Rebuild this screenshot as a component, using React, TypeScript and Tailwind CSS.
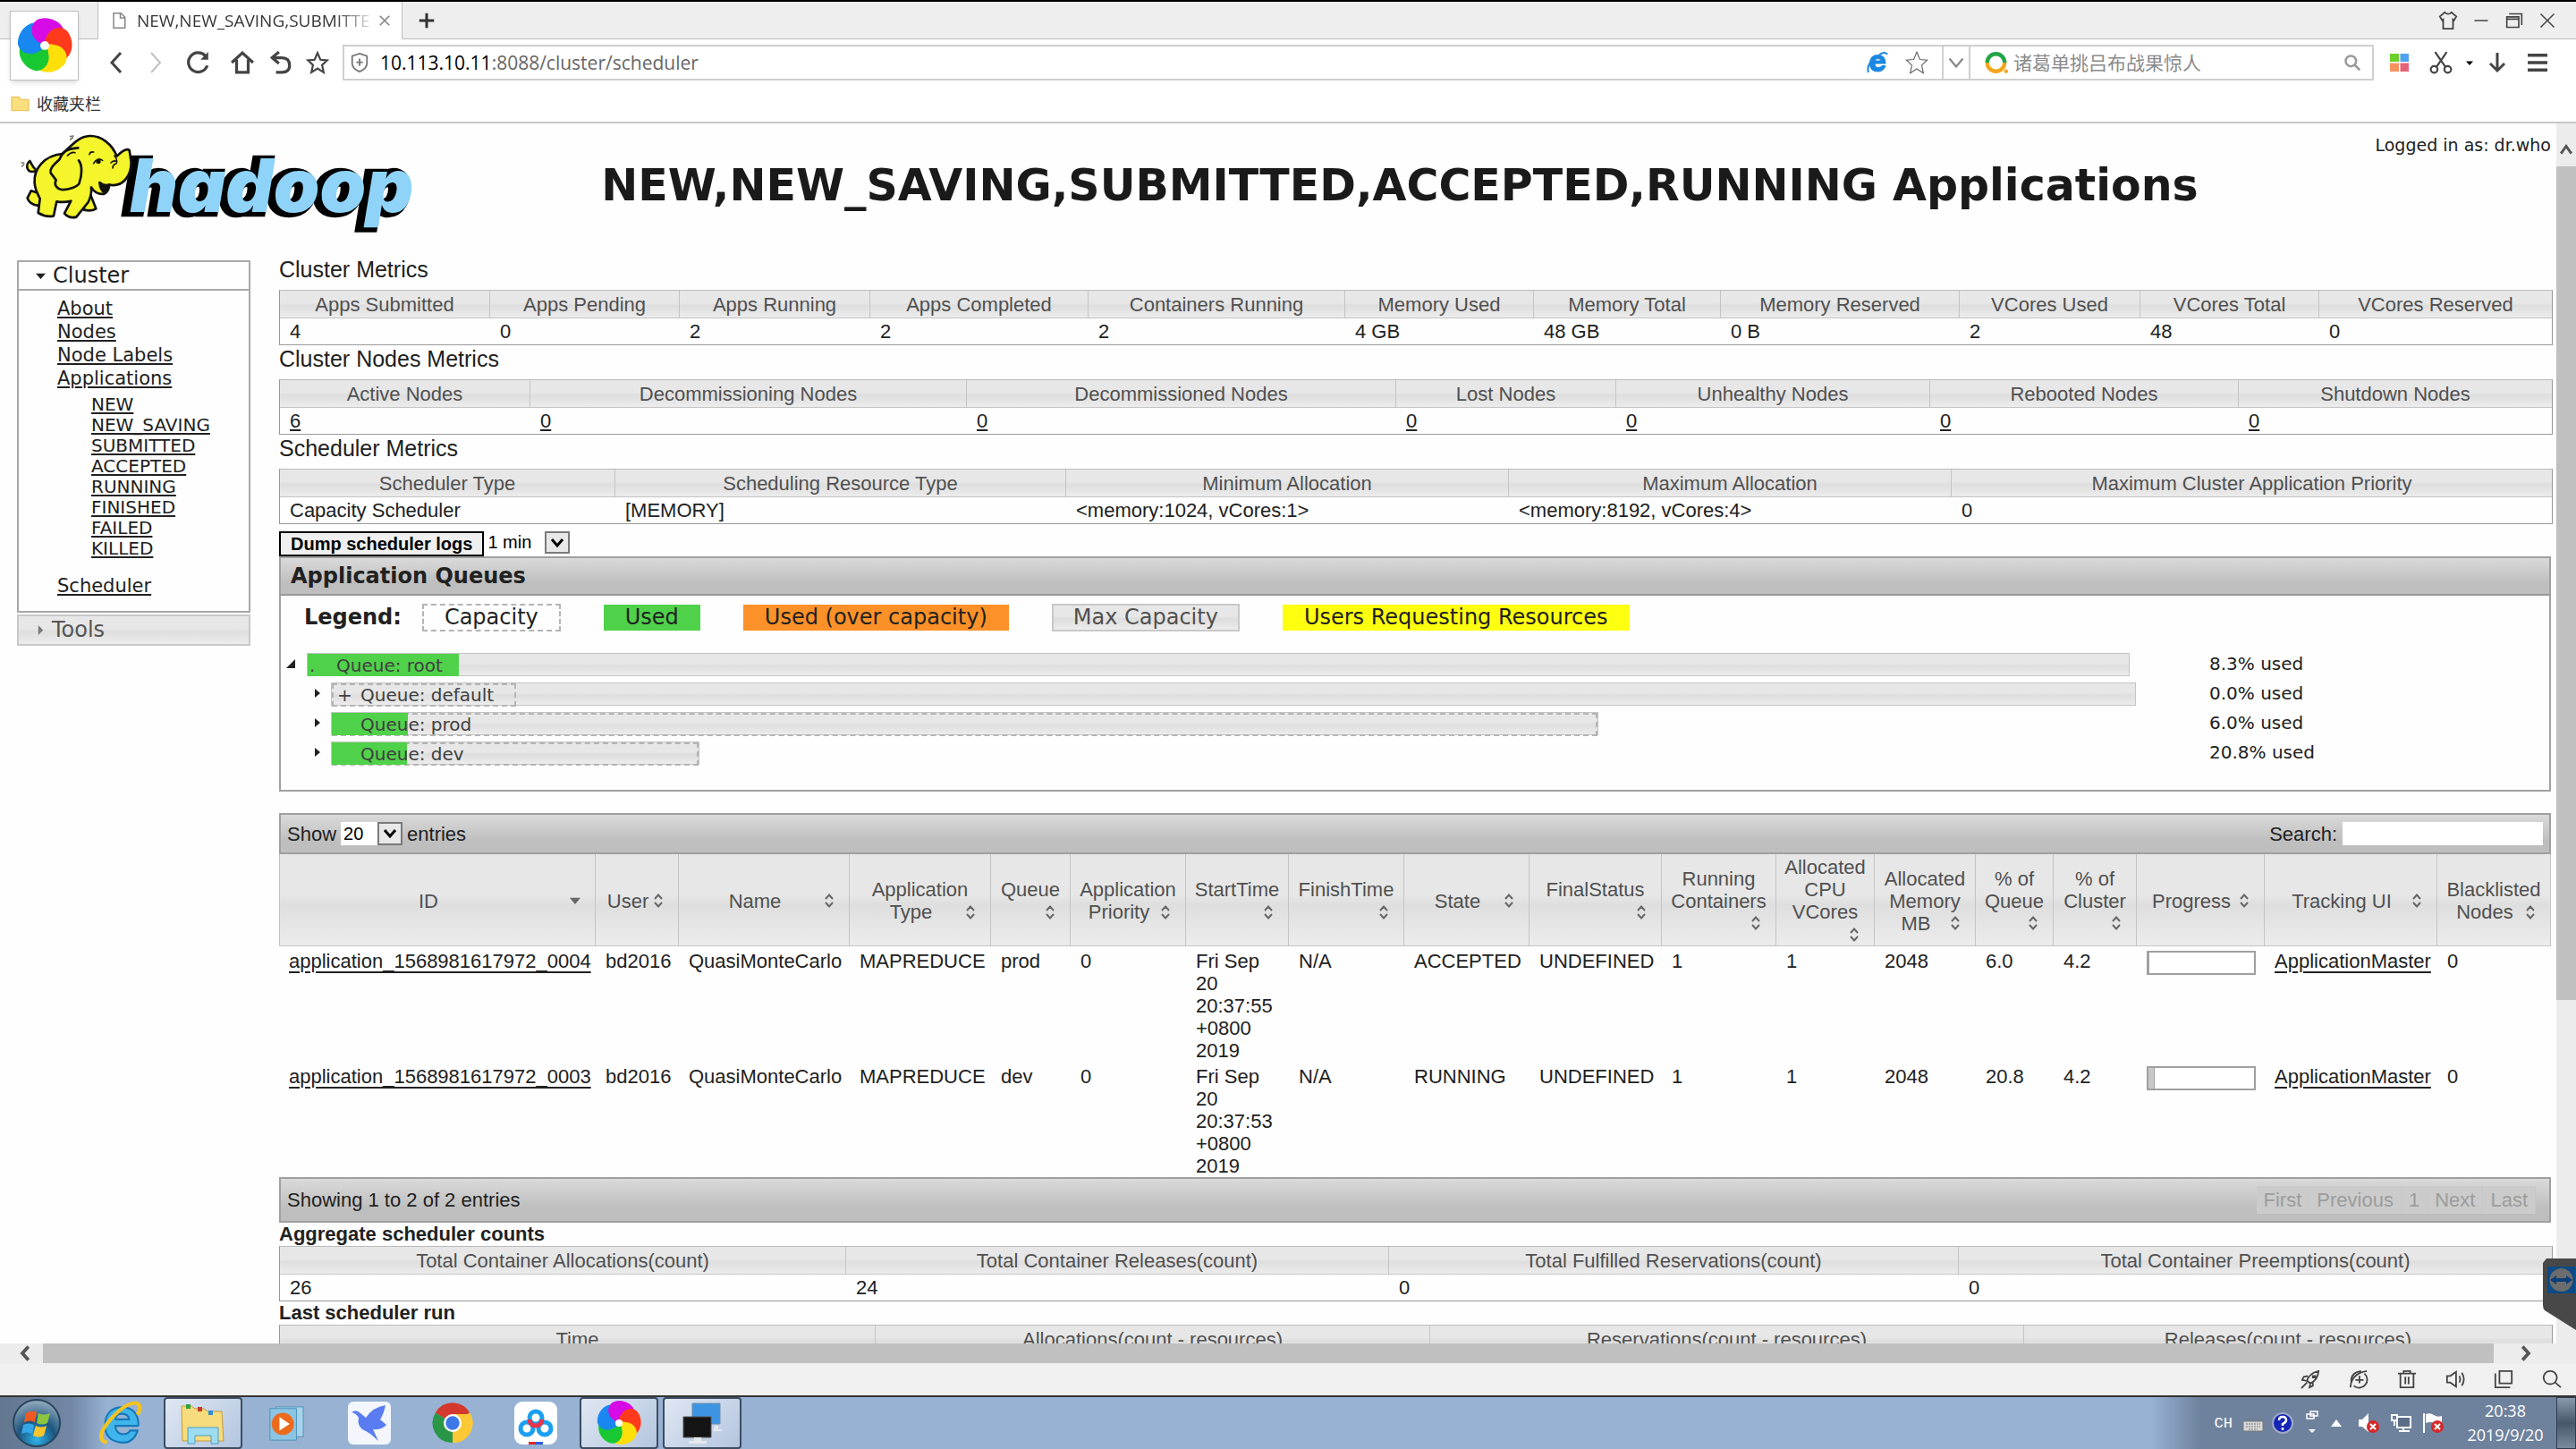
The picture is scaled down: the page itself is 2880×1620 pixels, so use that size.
import type { ReactNode } from "react";

const stroke = {
  fill: "none",
  stroke: "currentColor",
  strokeLinecap: "butt" as const,
  strokeLinejoin: "miter" as const,
};

function Pinwheel({ className }: { className: string }) {
  const blades = ["#d60be6", "#ff3a1c", "#ffdf0a", "#18c832", "#1888f0"];
  return (
    <svg viewBox="-50 -50 100 100" className={className} aria-hidden="true">
      {blades.map((c, i) => (
        <path
          key={c}
          d="M3 -6 C-3 2 -10 -2 -14 -8 C-28 -20 -26 -40 -12 -47 C8 -54 30 -44 35 -27 C20 -31 6 -24 5 -6 Z"
          fill={c}
          transform={`rotate(${i * 72})`}
        />
      ))}
      <path d="M-8 -4 C-28 -16 -28 -38 -12 -47 C-4 -50 4 -50 10 -48 C-4 -38 -4 -18 2 -8 Z" fill="#d60be6" />
      <circle r="8" fill="#fff" />
    </svg>
  );
}

function HadoopLogo() {
  return (
    <svg viewBox="0 0 1500 390" className="h-[130px] w-[500px]" role="img" aria-label="hadoop">
      <g
        fontFamily="Inter, sans-serif"
        fontWeight="900"
        fontStyle="italic"
        fontSize="248"
        strokeLinejoin="miter"
      >
        <text x="420" y="300" fill="#000" stroke="#000" strokeWidth="26">hadoop</text>
        <text x="436" y="298" fill="#8fd3f8">hadoop</text>
      </g>
      <g stroke="#111" strokeWidth="8" strokeLinejoin="round" strokeLinecap="round" fill="#f4f52a">
        <path d="M118 160 C92 170 82 140 100 126 C108 140 112 150 118 152" />
        <path d="M104 226 L92 250 Q98 272 130 276 L150 240 Z" />
        <path d="M300 230 L322 286 Q306 296 282 290 L280 250 Z" />
        <path d="M208 102 C150 108 112 150 116 200 C118 225 128 240 134 252 L128 300 Q154 316 180 310 L190 262 Q215 266 238 260 L216 302 Q232 320 256 314 L296 264 Q308 240 306 214 Q322 240 350 236 Q366 226 366 206 C410 214 440 180 440 130 L434 90 Q422 80 392 110 C376 70 340 40 300 42 C260 44 236 80 208 102 Z" />
        <path d="M262 82 C220 84 208 100 200 120 C180 140 166 150 170 166 L188 190 C180 206 190 218 206 222 C230 224 262 212 266 200 C276 170 276 140 264 124" />
        <path d="M334 198 Q346 210 366 206 Q364 226 348 230 Q336 222 334 198 Z" fill="#111" />
      </g>
      <g fill="none" stroke="#111" strokeWidth="5" strokeLinecap="round">
        <path d="M226 108 Q240 94 252 98M300 104 Q302 94 314 96M372 132 Q384 120 392 130 M378 150 Q378 138 390 134M384 108 Q392 118 392 128" />
        <path d="M236 44 l10 -2 M236 54 l8 -6 M72 132 l8 0 M74 144 l6 -6" stroke="#777" />
        <path d="M314 134 Q326 112 344 124" />
      </g>
      <ellipse cx="330" cy="128" rx="8" ry="7" fill="#111" />
    </svg>
  );
}

function Tri({ dir, className }: { dir: "down" | "right" | "corner"; className: string }) {
  const d = { down: "M0 1 H10 L5 10 Z", right: "M2 0 L8 5 L2 10 Z", corner: "M10 0 V10 H0 Z" }[dir];
  return (
    <svg viewBox="0 0 10 10" className={className} preserveAspectRatio="none" aria-hidden="true">
      <path d={d} fill="currentColor" />
    </svg>
  );
}

function SortIcon({ active }: { active?: boolean }) {
  if (active) return <Tri dir="down" className="h-2 w-3 text-[#666]" />;
  return (
    <svg viewBox="0 0 12 16" className="h-4 w-3 text-[#666]" aria-hidden="true">
      <path d="M2 6 L6 1.5 L10 6 M2 10 L6 14.5 L10 10" {...stroke} strokeWidth="2" />
    </svg>
  );
}

function Dropdown({ label, options, className }: { label: string; options: string[]; className: string }) {
  return (
    <span className="relative inline-flex">
      <select aria-label={label} className={className}>
        {options.map((o) => (
          <option key={o}>{o}</option>
        ))}
      </select>
      <span className="pointer-events-none absolute inset-y-0 right-0 flex w-7 items-center justify-center border-2 border-[#7a7a7a] bg-[#e8e8e8]">
        <svg viewBox="0 0 16 12" className="h-3 w-4 text-black" aria-hidden="true">
          <path d="M2 2 L8 9 L14 2" {...stroke} strokeWidth="3" />
        </svg>
      </span>
    </span>
  );
}

const headGradient = "bg-[linear-gradient(to_bottom,#e7e7e7_45%,#dedede_55%,#ececec)]";
const barGradient = "bg-[linear-gradient(to_bottom,#dadada,#bebebe_70%,#bebebe)]";

type Column = { head: string; value: string; width: string };

function MetricsTable({ columns, link }: { columns: Column[]; link?: boolean }) {
  return (
    <table className="w-full table-fixed border-separate border-spacing-0 border border-[#999] border-t-[#bbb]">
      <thead>
        <tr>
          {columns.map((c) => (
            <th
              key={c.head}
              className={`${c.width} ${headGradient} h-[31px] border-r border-b border-[#c4c4c4] p-0 text-center font-normal text-[#505050] last:border-r-0`}
            >
              {c.head}
            </th>
          ))}
        </tr>
      </thead>
      <tbody>
        <tr>
          {columns.map((c) => (
            <td key={c.head} className="h-[29px] py-0 pr-0 pl-[11px]">
              {link ? (
                <a href="#nodes" className="underline decoration-2 underline-offset-2">
                  {c.value}
                </a>
              ) : (
                c.value
              )}
            </td>
          ))}
        </tr>
      </tbody>
    </table>
  );
}

const clusterMetrics: Column[] = [
  { head: "Apps Submitted", value: "4", width: "w-[235px]" },
  { head: "Apps Pending", value: "0", width: "w-[212px]" },
  { head: "Apps Running", value: "2", width: "w-[213px]" },
  { head: "Apps Completed", value: "2", width: "w-[244px]" },
  { head: "Containers Running", value: "2", width: "w-[287px]" },
  { head: "Memory Used", value: "4 GB", width: "w-[211px]" },
  { head: "Memory Total", value: "48 GB", width: "w-[209px]" },
  { head: "Memory Reserved", value: "0 B", width: "w-[267px]" },
  { head: "VCores Used", value: "2", width: "w-[202px]" },
  { head: "VCores Total", value: "48", width: "w-[200px]" },
  { head: "VCores Reserved", value: "0", width: "w-[260px]" },
];

const nodeMetrics: Column[] = [
  { head: "Active Nodes", value: "6", width: "w-[280px]" },
  { head: "Decommissioning Nodes", value: "0", width: "w-[488px]" },
  { head: "Decommissioned Nodes", value: "0", width: "w-[480px]" },
  { head: "Lost Nodes", value: "0", width: "w-[246px]" },
  { head: "Unhealthy Nodes", value: "0", width: "w-[351px]" },
  { head: "Rebooted Nodes", value: "0", width: "w-[345px]" },
  { head: "Shutdown Nodes", value: "0", width: "w-[350px]" },
];

const schedulerMetrics: Column[] = [
  { head: "Scheduler Type", value: "Capacity Scheduler", width: "w-[375px]" },
  { head: "Scheduling Resource Type", value: "[MEMORY]", width: "w-[504px]" },
  { head: "Minimum Allocation", value: "<memory:1024, vCores:1>", width: "w-[495px]" },
  { head: "Maximum Allocation", value: "<memory:8192, vCores:4>", width: "w-[495px]" },
  { head: "Maximum Cluster Application Priority", value: "0", width: "w-[671px]" },
];

const aggregateCounts: Column[] = [
  { head: "Total Container Allocations(count)", value: "26", width: "w-[633px]" },
  { head: "Total Container Releases(count)", value: "24", width: "w-[607px]" },
  { head: "Total Fulfilled Reservations(count)", value: "0", width: "w-[637px]" },
  { head: "Total Container Preemptions(count)", value: "0", width: "w-[663px]" },
];

const lastRun: Column[] = [
  { head: "Time", value: "", width: "w-[666px]" },
  { head: "Allocations(count - resources)", value: "", width: "w-[620px]" },
  { head: "Reservations(count - resources)", value: "", width: "w-[664px]" },
  { head: "Releases(count - resources)", value: "", width: "w-[590px]" },
];

const appStates = ["NEW", "NEW_SAVING", "SUBMITTED", "ACCEPTED", "RUNNING", "FINISHED", "FAILED", "KILLED"];

function Sidebar() {
  return (
    <nav className="mt-[5px] w-[261px] shrink-0 font-['DejaVu_Sans',sans-serif] text-[#212121]">
      <div className="border-2 border-[#a8a8a8]">
        <h3 className="flex h-[32px] items-center border-b-2 border-[#a8a8a8] pl-[19px] text-[24px]">
          <Tri dir="down" className="mr-[8px] h-[7px] w-[11px]" />
          Cluster
        </h3>
        <ul className="h-[358px] pt-[7px] pl-[43px] text-[21px] leading-[26px] underline decoration-2 underline-offset-2">
          {["About", "Nodes", "Node Labels", "Applications"].map((t) => (
            <li key={t} className="h-[26px]">
              <a href={`#${t}`}>{t}</a>
            </li>
          ))}
          <li>
            <ul className="my-[5px] pl-[38px] text-[20px] leading-[23px]">
              {appStates.map((t) => (
                <li key={t} className="h-[23px]">
                  <a href={`#${t}`}>{t}</a>
                </li>
              ))}
            </ul>
          </li>
          <li className="pt-[12px]">
            <a href="#scheduler">Scheduler</a>
          </li>
        </ul>
      </div>
      <h3
        className={`${headGradient} mt-[2px] flex h-[35px] items-center border-2 border-[#c8c8c8] pl-[20px] text-[24px] text-[#555]`}
      >
        <Tri dir="right" className="mr-[8px] h-[11px] w-[9px] text-[#777]" />
        Tools
      </h3>
    </nav>
  );
}

type Queue = { name: string; mark: string; capacity: number; max: number; fill: number; used: string; root?: boolean };

const queues: Queue[] = [
  { name: "root", mark: ".", capacity: 0, max: 100, fill: 8.3, used: "8.3% used", root: true },
  { name: "default", mark: "+", capacity: 10.2, max: 100, fill: 0, used: "0.0% used" },
  { name: "prod", mark: "", capacity: 70.2, max: 70.2, fill: 4.2, used: "6.0% used" },
  { name: "dev", mark: "", capacity: 20.4, max: 20.4, fill: 4.2, used: "20.8% used" },
];

function QueueRow({ q }: { q: Queue }) {
  return (
    <div className="flex h-[33px] items-start">
      <div className={q.root ? "flex flex-1 pl-[6px] pr-[89px]" : "flex flex-1 pl-[36px] pr-[82px]"}>
        <button
          type="button"
          aria-label={`Toggle ${q.name}`}
          className={q.root ? "flex h-[24px] w-[23px] items-center" : "flex h-[24px] w-[20px] items-center"}
        >
          <Tri dir={q.root ? "corner" : "right"} className="h-[10px] w-[10px]" />
        </button>
        <div className="h-[26px] flex-1">
          <div
            className={`${headGradient} relative h-[26px] border border-[#c4c4c4]`}
            style={{ width: `${q.max}%` }}
          >
            {q.capacity > 0 && (
              <div
                className="absolute top-0 left-0 h-[26px] border-2 border-dashed border-[#b4b4b4]"
                style={{ width: `${(q.capacity / q.max) * 100}%` }}
              />
            )}
            <div
              className="absolute top-0 left-0 h-[25px] bg-[#4fd14a]"
              style={{ width: `${(q.fill / q.max) * 100}%` }}
            />
            <div className="relative flex leading-[26px] whitespace-nowrap text-[#404040]">
              <span className={q.root ? "w-[32px] pl-[2px]" : "w-[32px] pl-[6px]"}>{q.mark}</span>
              <span>Queue: {q.name}</span>
            </div>
          </div>
        </div>
      </div>
      <span className="w-[380px] leading-[24px]">{q.used}</span>
    </div>
  );
}

function ApplicationQueues() {
  return (
    <section className="border-2 border-[#a0a0a0] font-['DejaVu_Sans',sans-serif] text-[#212121]">
      <h3
        className={`${barGradient} flex h-[42px] items-center border-b-2 border-[#999] pl-[11px] text-[24px] font-bold`}
      >
        Application Queues
      </h3>
      <div className="flex items-center gap-[48px] pt-[9px] pl-[26px] text-[24px] leading-[29px]">
        <div className="flex items-center gap-[23px]">
          <b>Legend:</b>
          <span className="border-2 border-dashed border-[#b4b4b4] px-[23px] leading-[27px]">Capacity</span>
        </div>
        <span className="bg-[#4fd14a] px-[24px]">Used</span>
        <span className="bg-[#fb9128] px-[24px]">Used (over capacity)</span>
        <span className={`${headGradient} border-2 border-[#c8c8c8] px-[22px] leading-[27px] text-[#505050]`}>
          Max Capacity
        </span>
        <span className="bg-[#ffff10] px-[24px]">Users Requesting Resources</span>
      </div>
      <div className="pt-[24px] pb-[21px] text-[20px]">
        {queues.map((q) => (
          <QueueRow key={q.name} q={q} />
        ))}
      </div>
    </section>
  );
}

const appColumns: { lines: string[]; width: string; active?: boolean }[] = [
  { lines: ["ID"], width: "w-[354px]", active: true },
  { lines: ["User"], width: "w-[93px]" },
  { lines: ["Name"], width: "w-[191px]" },
  { lines: ["Application", "Type"], width: "w-[158px]" },
  { lines: ["Queue", ""], width: "w-[89px]" },
  { lines: ["Application", "Priority"], width: "w-[129px]" },
  { lines: ["StartTime", ""], width: "w-[115px]" },
  { lines: ["FinishTime", ""], width: "w-[129px]" },
  { lines: ["State"], width: "w-[140px]" },
  { lines: ["FinalStatus", ""], width: "w-[148px]" },
  { lines: ["Running", "Containers", ""], width: "w-[128px]" },
  { lines: ["Allocated", "CPU", "VCores", ""], width: "w-[110px]" },
  { lines: ["Allocated", "Memory", "MB"], width: "w-[113px]" },
  { lines: ["% of", "Queue", ""], width: "w-[87px]" },
  { lines: ["% of", "Cluster", ""], width: "w-[93px]" },
  { lines: ["Progress"], width: "w-[143px]" },
  { lines: ["Tracking UI"], width: "w-[193px]" },
  { lines: ["Blacklisted", "Nodes"], width: "w-[127px]" },
];

const apps = [
  {
    id: "application_1568981617972_0004", queue: "prod", start: "Fri Sep 20 20:37:55 +0800 2019",
    state: "ACCEPTED", share: "6.0", progress: 0,
  },
  {
    id: "application_1568981617972_0003", queue: "dev", start: "Fri Sep 20 20:37:53 +0800 2019",
    state: "RUNNING", share: "20.8", progress: 6,
  },
];

function AppsTable() {
  return (
    <section className="mt-[24px]">
      <div className={`${barGradient} flex h-[46px] items-center justify-between border-2 border-[#a0a0a0] px-[7px]`}>
        <div className="flex items-center gap-[5px]">
          Show
          <Dropdown
            label="Entries per page"
            options={["20", "50", "100"]}
            className="h-[26px] w-[69px] appearance-none bg-white pl-[3px] text-[20px] leading-[24px] font-normal text-black"
          />
          entries
        </div>
        <label className="flex items-center gap-[6px]">
          Search:
          <input type="text" className="h-[26px] w-[224px] bg-white px-1" />
        </label>
      </div>
      <table className="w-full table-fixed border-separate border-spacing-0">
        <thead>
          <tr>
            {appColumns.map((c, i) => {
              const last = c.lines.length - 1;
              return (
                <th
                  key={i}
                  className={`${c.width} ${headGradient} h-[103px] border-r border-b border-[#c4c4c4] p-0 font-normal text-[#505050] first:border-l`}
                >
                  <button type="button" className="block w-full pt-[2px] leading-[25px]">
                    {c.lines.slice(0, last).map((l) => (
                      <span key={l} className="block">
                        {l}
                      </span>
                    ))}
                    <span className="flex h-[25px] items-center pr-[16px] pl-[8px]">
                      <span className="flex-1 text-center whitespace-nowrap">{c.lines[last]}</span>
                      <SortIcon active={c.active} />
                    </span>
                  </button>
                </th>
              );
            })}
          </tr>
        </thead>
        <tbody>
          {apps.map((a) => {
            const cells: ReactNode[] = [
              <a href={`#${a.id}`} className="underline decoration-2 underline-offset-4">{a.id}</a>,
              "bd2016", "QuasiMonteCarlo", "MAPREDUCE", a.queue, "0",
              <span className="whitespace-normal">{a.start}</span>,
              "N/A", a.state, "UNDEFINED", "1", "1", "2048", a.share, "4.2",
              <div role="progressbar" aria-valuenow={a.progress} className="mt-[1px] h-[27px] w-[122px] border-2 border-[#a0a0a0] bg-white">
                <div className="h-full border-r border-[#a0a0a0] bg-[#c8c8c8]" style={{ width: `${a.progress}%` }} />
              </div>,
              <a href="#master" className="underline decoration-2 underline-offset-4">ApplicationMaster</a>,
              "0",
            ];
            return (
              <tr key={a.id} className="align-top leading-[25px] whitespace-nowrap">
                {cells.map((c, i) => (
                  <td key={i} className="h-[129px] py-0 pt-[4px] pr-[11px] pl-[11px]">
                    {c}
                  </td>
                ))}
              </tr>
            );
          })}
        </tbody>
      </table>
      <div className={`${barGradient} flex h-[51px] items-center justify-between border-2 border-[#a0a0a0] pr-[15px] pl-[7px]`}>
        <span>Showing 1 to 2 of 2 entries</span>
        <div className="flex text-[#9c9c9c]">
          {["First", "Previous", "1", "Next", "Last"].map((p) => (
            <button
              key={p}
              type="button"
              className="h-[31px] border-r border-[#c6c6c6] bg-[#cbcbcb] px-[8px] leading-[31px]"
            >
              {p}
            </button>
          ))}
        </div>
      </div>
    </section>
  );
}

function Icon({ box = 24, className, children, w = 2 }: { box?: number; className: string; children: ReactNode; w?: number }) {
  return (
    <svg viewBox={`0 0 ${box} ${box}`} className={className} {...stroke} strokeWidth={w} aria-hidden="true">
      {children}
    </svg>
  );
}

function ToolButton({ label, className, children }: { label: string; className: string; children: ReactNode }) {
  return (
    <button type="button" aria-label={label} className={`flex items-center justify-center ${className}`}>
      {children}
    </button>
  );
}

const starPath = "M12 2 L15 9 L22 9.600 L16.700 14.500 L18.300 22 L12 18 L5.700 22 L7.300 14.500 L2 9.600 L9 9 Z";

function BrowserChrome() {
  return (
    <header className="relative shrink-0 border-b-2 border-[#c8c8c8] bg-white font-['Open_Sans','Noto_Sans_CJK_SC',sans-serif]">
      <div className="absolute top-[12px] left-[11px] flex h-[78px] w-[77px] items-center justify-center border border-[#c0c0c0] bg-white shadow-md">
        <Pinwheel className="h-[62px] w-[62px]" />
      </div>
      <div className="flex h-[44px] items-stretch border-t-2 border-b border-t-black border-b-[#c0c0c0] bg-[#eee]">
        <div className="-mb-px ml-[109px] flex w-[341px] items-center border-x border-[#c0c0c0] bg-white pr-[12px] pl-[14px] text-[19px] text-[#333]">
          <Icon className="mr-[11px] h-[20px] w-[18px] text-[#888]" w={2}>
            <path d="M4 1 H15 L21 7 V23 H4 Z M14 1 V8 H21" />
          </Icon>
          <span className="flex-1 overflow-hidden bg-[linear-gradient(to_right,#333_85%,#ddd)] bg-clip-text whitespace-nowrap text-transparent">
            NEW,NEW_SAVING,SUBMITTE
          </span>
          <button type="button" aria-label="Close tab" className="ml-[10px]">
            <Icon className="h-[14px] w-[14px] text-[#888]" w={3}>
              <path d="M3 3 L21 21 M21 3 L3 21" />
            </Icon>
          </button>
        </div>
        <ToolButton label="New tab" className="ml-[15px] w-[24px]">
          <Icon className="h-[18px] w-[18px] text-[#333]" w={4}>
            <path d="M12 1 V23 M1 12 H23" />
          </Icon>
        </ToolButton>
        <div className="ml-auto flex items-center gap-[13px] pr-[20px] text-[#444]">
          <ToolButton label="Skin" className="h-[24px] w-[24px]">
            <Icon className="h-[22px] w-[22px]" w={2}>
              <path d="M8 2 Q12 6 16 2 L22 7 L19 12 L18 11 V22 H6 V11 L5 12 L2 7 Z" />
            </Icon>
          </ToolButton>
          <ToolButton label="Minimize" className="h-[24px] w-[24px]">
            <Icon className="h-[18px] w-[18px]" w={2}><path d="M2 12 H22" /></Icon>
          </ToolButton>
          <ToolButton label="Restore" className="h-[24px] w-[24px]">
            <Icon className="h-[20px] w-[20px]" w={2}>
              <path d="M2 7 H18 V21 H2 Z M2 10 H18 M5 3 H22 V18" />
            </Icon>
          </ToolButton>
          <ToolButton label="Close" className="h-[24px] w-[24px]">
            <Icon className="h-[18px] w-[18px]" w={2}><path d="M2 2 L22 22 M22 2 L2 22" /></Icon>
          </ToolButton>
        </div>
      </div>
      <div className="flex h-[52px] items-center pl-[115px] text-[#444]">
        <ToolButton label="Back" className="w-[30px]">
          <Icon className="h-[24px] w-[24px]" w={3}><path d="M17 1 L7 12 L17 23" /></Icon>
        </ToolButton>
        <ToolButton label="Forward" className="ml-[14px] w-[30px] text-[#c0c0c0]">
          <Icon className="h-[24px] w-[24px]" w={2}><path d="M7 1 L17 12 L7 23" /></Icon>
        </ToolButton>
        <ToolButton label="Reload" className="ml-[18px] w-[30px]">
          <Icon className="h-[26px] w-[26px]" w={3}>
            <path d="M21 15 A10 10 0 1 1 19 5" />
            <path d="M22 1 V9 H14 Z" fill="currentColor" stroke="none" />
          </Icon>
        </ToolButton>
        <ToolButton label="Home" className="ml-[19px] w-[30px]">
          <Icon className="h-[26px] w-[26px]" w={3}>
            <path d="M1 12 L12 2 L23 12 M6 9 V22 H18 V9" />
          </Icon>
        </ToolButton>
        <ToolButton label="Undo" className="ml-[13px] w-[30px]">
          <Icon className="h-[26px] w-[26px]" w={3}>
            <path d="M10 1 L3 7 L10 13 M3 7 H13 Q21 7 21 15 Q21 22 13 22 H7" />
          </Icon>
        </ToolButton>
        <ToolButton label="Bookmark" className="ml-[11px] w-[30px]">
          <Icon className="h-[26px] w-[26px]" w={2}><path d={starPath} /></Icon>
        </ToolButton>
        <div className="ml-[13px] flex h-[40px] flex-1 items-stretch border-2 border-[#cfcfcf]">
          <div className="flex flex-1 items-center pr-[14px] pl-[6px] text-[21px] text-[#666]">
            <Icon className="mr-[12px] h-[26px] w-[22px] text-[#777]" w={2}>
              <path d="M12 1 L21 4 V13 Q21 19 12 23 Q3 19 3 13 V4 Z M12 7 V16 M8 11.500 H16" />
            </Icon>
            <span role="textbox" aria-label="Address" className="flex-1">
              <span className="text-black">10.113.10.11</span>:8088/cluster/scheduler
            </span>
            <svg viewBox="0 0 24 24" className="mr-[18px] h-[24px] w-[24px]" aria-hidden="true">
              <path d="M21 13 H9 Q9 17.500 13 17.500 Q16 17.500 17 15.500 H21 Q19 22 12.500 22 Q3.500 22 3.500 13 Q3.500 3.500 12.500 3.500 Q21 3.500 21 13 M9 10 H16 Q15.500 7.500 12.500 7.500 Q9.500 7.500 9 10" fill="#1b87e0" stroke="#1b87e0" fillRule="evenodd" />
              <path d="M2 23 Q-1 14 10 6 M14 3 Q21 -1 23 3" fill="none" stroke="#1b87e0" strokeWidth="2" />
            </svg>
            <Icon className="h-[28px] w-[28px]" w={1}><path d={starPath} /></Icon>
          </div>
          <ToolButton label="Address history" className="w-[32px] border-x-2 border-[#cfcfcf] text-[#888]">
            <Icon className="h-[18px] w-[18px]" w={3}><path d="M2 6 L12 18 L22 6" /></Icon>
          </ToolButton>
          <div className="flex w-[449px] items-center pr-[12px] pl-[16px]">
            <svg viewBox="0 0 24 24" className="mr-[6px] h-[26px] w-[26px]" aria-hidden="true">
              <path d="M2.500 12 A9 9 0 0 1 20.500 12" fill="none" stroke="#21a548" strokeWidth="4" />
              <path d="M2.500 12 A9 9 0 0 0 20.500 12" fill="none" stroke="#f3a51c" strokeWidth="4" />
              <circle cx="22" cy="21" r="2" fill="#f3a51c" />
            </svg>
            <input
              aria-label="Web search"
              placeholder="诸葛单挑吕布战果惊人"
              className="min-w-0 flex-1 bg-transparent text-[21px] placeholder:text-[#8a8a8a]"
            />
            <Icon className="h-[20px] w-[20px] text-[#999]" w={3}>
              <circle cx="10" cy="10" r="7" />
              <path d="M15 15 L22 22" />
            </Icon>
          </div>
        </div>
        <div className="flex items-center pr-[32px] pl-[18px]">
          <ToolButton label="Apps" className="w-[22px]">
            <svg viewBox="0 0 22 22" className="h-[22px] w-[22px]" aria-hidden="true">
              <path d="M0 1 H10 V10 H0 Z" fill="#6bd02a" />
              <path d="M11.500 1 H21 V10 H11.500 Z" fill="#4fa3ee" />
              <path d="M0 11.500 H10 V21 H0 Z" fill="#f5935f" />
              <path d="M11.500 11.500 H21 V21 H11.500 Z" fill="#e56378" />
            </svg>
          </ToolButton>
          <ToolButton label="Screenshot" className="ml-[22px] w-[26px]">
            <Icon className="h-[26px] w-[26px]" w={2}>
              <path d="M6 1 L17 17 M18 1 L7 17" />
              <circle cx="5" cy="19" r="3.500" />
              <circle cx="19" cy="19" r="3.500" />
            </Icon>
          </ToolButton>
          <Tri dir="down" className="ml-[15px] h-[5px] w-[8px] text-black" />
          <ToolButton label="Downloads" className="ml-[15px] w-[24px]">
            <Icon className="h-[24px] w-[24px]" w={3}><path d="M12 1 V21 M4 13 L12 21 L20 13" /></Icon>
          </ToolButton>
          <ToolButton label="Menu" className="ml-[22px] w-[22px]">
            <Icon className="h-[22px] w-[22px]" w={4}><path d="M0 3 H24 M0 12 H24 M0 21 H24" /></Icon>
          </ToolButton>
        </div>
      </div>
      <div className="flex h-[40px] items-center gap-[8px] pl-[12px] text-[18px] text-[#333]">
        <svg viewBox="0 0 22 18" className="h-[18px] w-[21px]" aria-hidden="true">
          <path d="M1 1 H10 L12 4 H21 V17 H1 Z" fill="#fbdf7e" stroke="#e3b84c" />
        </svg>
        收藏夹栏
      </div>
    </header>
  );
}

function StatusBar() {
  const icons: { label: string; art: ReactNode }[] = [
    { label: "Boost", art: <path d="M8 14 Q10 5 22 2 Q21 13 12 17 Z M9 8 L4 9 L2 13 L8 14 M15 15 L15 20 L11 22 L12 17 M8 16 L1 23 M15 8 h3 v2 h-3z" /> },
    { label: "Translate", art: <path d="M19 5 A9.500 9.500 0 1 1 6 20 M2 22 Q3 5 22 2 M3 15 Q2 4 15 2 M13 8 V17 M8 13 H18" /> },
    { label: "Clean", art: <path d="M4 6 V22 H20 V6 M1 5 H23 M8 5 V2 H16 V5 M10 9 V18 M14 9 V18" /> },
    { label: "Sound", art: <path d="M2 8 V16 H6 L13 21 V3 L6 8 Z M17 8 Q19 12 17 16 M20 4 Q25 12 20 20" /> },
    { label: "Windows", art: <path d="M7 2 H22 V17 H7 Z M2 5 V22 H20" /> },
    { label: "Find", art: <path d="M10 2 A8 8 0 1 0 10.010 2 M16 16 L23 22" /> },
  ];
  return (
    <div className="flex h-[38px] shrink-0 items-center justify-end gap-[32px] border-b-2 border-[#333] bg-[#f0f0f0] pr-[16px] text-[#444]">
      {icons.map((i) => (
        <ToolButton key={i.label} label={i.label} className="w-[22px]">
          <Icon className="h-[22px] w-[22px]" w={2}>{i.art}</Icon>
        </ToolButton>
      ))}
    </div>
  );
}

function TaskButton({ label, active, children }: { label: string; active?: boolean; children: ReactNode }) {
  return (
    <button
      type="button"
      aria-label={label}
      className={
        active
          ? "flex w-[88px] items-center justify-center rounded-sm border-2 border-[#3d4c60] bg-[linear-gradient(135deg,#dfe7f2,#b3c5df)]"
          : "flex w-[88px] items-center justify-center"
      }
    >
      {children}
    </button>
  );
}

function ErrorBadge({ x, y }: { x: number; y: number }) {
  return (
    <g>
      <circle cx={x} cy={y} r="7" fill="#d42a2a" />
      <path d={`M${x - 3} ${y - 3} l6 6 m0 -6 l-6 6`} stroke="#fff" strokeWidth="2" />
    </g>
  );
}

function Taskbar() {
  return (
    <footer className="flex h-[58px] shrink-0 items-stretch bg-[linear-gradient(to_right,#62768f,#7288a6_80px,#97b2d3_120px,#97b2d3_2405px,#6e829d_2460px,#6e829d)] font-['Open_Sans',sans-serif] text-white">
      <button type="button" aria-label="Start" className="flex w-[82px] items-center justify-center">
        <svg viewBox="0 0 56 56" className="h-[56px] w-[56px]" aria-hidden="true">
          <defs>
            <radialGradient id="orb" cx="50%" cy="85%" r="80%">
              <stop offset="0" stopColor="#2fb4ea" />
              <stop offset="0.500" stopColor="#1c5680" />
              <stop offset="1" stopColor="#8ba4b8" />
            </radialGradient>
          </defs>
          <circle cx="28" cy="28" r="26" fill="url(#orb)" stroke="#27435c" strokeWidth="2" />
          <path d="M16 17 Q22 13 28 16 L26 27 Q20 24 14 27 Z" fill="#ef5a24" />
          <path d="M30 17 Q36 20 43 17 L40 28 Q34 31 28 28 Z" fill="#8cc63f" />
          <path d="M13 30 Q19 27 25 30 L23 40 Q17 37 11 40 Z" fill="#36a5e6" />
          <path d="M27 31 Q33 34 39 31 L36 42 Q30 45 24 42 Z" fill="#fdc52c" />
        </svg>
      </button>
      <div className="ml-[8px] flex items-stretch gap-[5px]">
        <TaskButton label="Internet Explorer">
          <svg viewBox="0 0 48 48" className="h-[50px] w-[50px]" aria-hidden="true">
            <path d="M44 27 H19 Q20 36 28 36 Q33 36 35 32 H43 Q39 45 27 45 Q8 44 8 26 Q9 7 27 7 Q44 8 44 27 M19 20 H34 Q33 14 26 14 Q20 14 19 20" fill="#3fb5ec" stroke="#1577b8" strokeWidth="2" fillRule="evenodd" />
            <path d="M10 45 Q-4 41 14 20 Q32 0 43 3 Q48 6 43 15" fill="none" stroke="#f5c320" strokeWidth="4" />
          </svg>
        </TaskButton>
        <TaskButton label="Explorer" active>
          <svg viewBox="0 0 50 48" className="h-[48px] w-[50px]" aria-hidden="true">
            <path d="M1 5 H12 L16 8 H26 L30 11 H46 L48 44 H2 Z" fill="#f6dc7d" stroke="#c79a36" />
            <path d="M6 3 h5 v5 h-5z" fill="#2fa33a" />
            <path d="M19 6 h5 v5 h-5z" fill="#c43c2a" />
            <path d="M31 10 h5 v5 h-5z" fill="#2d8ed0" />
            <path d="M8 47 V29 H42 V47 H34 V38 H16 V47 Z" fill="#9edcf2" stroke="#4ba0c4" />
          </svg>
        </TaskButton>
        <TaskButton label="Media Player">
          <svg viewBox="0 0 44 44" className="h-[42px] w-[44px]" aria-hidden="true">
            <path d="M10 3 H42 V38 H10 Z" fill="#a6d3ec" stroke="#4f8fb5" />
            <path d="M3 5 H34 V42 H3 Z" fill="#8cc4e4" stroke="#4f8fb5" />
            <circle cx="18" cy="23" r="13" fill="#ec6a1c" />
            <path d="M14 15 L26 23 L14 31 Z" fill="#fff" />
          </svg>
        </TaskButton>
        <TaskButton label="Thunder">
          <svg viewBox="0 0 48 48" className="h-[48px] w-[48px]" aria-hidden="true">
            <rect width="48" height="48" rx="6" fill="#f4f6fd" />
            <path d="M4 12 Q9 8 14 13 L20 18 Q28 6 42 4 Q40 14 36 20 L43 26 Q38 32 28 31 L34 44 Q24 34 16 31 Q10 26 12 18 Q9 13 4 12 Z" fill="#5a7cf2" />
          </svg>
        </TaskButton>
        <TaskButton label="Chrome">
          <svg viewBox="-24 -24 48 48" className="h-[46px] w-[46px]" aria-hidden="true">
            <path d="M0 0 L-20 -12 A23 23 0 0 1 20 -12 Z" fill="#d5382c" />
            <path d="M0 0 L20 -12 A23 23 0 0 1 0 23 Z" fill="#fbc936" />
            <path d="M0 0 L0 23 A23 23 0 0 1 -20 -12 Z" fill="#2a9647" />
            <path d="M0 -10.500 H21 A23 23 0 0 1 0 23 L9 5 Z" fill="#fbc936" />
            <circle r="10.500" fill="#fff" />
            <circle r="8" fill="#3c78e8" />
          </svg>
        </TaskButton>
        <TaskButton label="Netdisk">
          <svg viewBox="0 0 48 48" className="h-[48px] w-[48px]" aria-hidden="true">
            <rect width="48" height="48" rx="9" fill="#fff" />
            <g fill="none" strokeWidth="5">
              <circle cx="14" cy="30" r="7" stroke="#1b9ff0" />
              <circle cx="34" cy="30" r="7" stroke="#1b9ff0" />
              <circle cx="24" cy="18" r="7" stroke="#1b9ff0" />
              <path d="M17 20 A7 7 0 0 0 31 20" stroke="#e8354c" />
            </g>
            <path d="M16 45 h8 v3 h-8z" fill="#e02a2a" />
            <path d="M24 45 h8 v3 h-8z" fill="#2b5be0" />
          </svg>
        </TaskButton>
        <TaskButton label="Browser" active>
          <Pinwheel className="h-[50px] w-[50px]" />
        </TaskButton>
        <TaskButton label="Remote Desktop" active>
          <svg viewBox="0 0 48 48" className="h-[48px] w-[48px]" aria-hidden="true">
            <path d="M13 2 H44 V25 H13 Z" fill="#3d94e2" stroke="#6f8fb0" />
            <path d="M3 17 H34 V40 H3 Z" fill="#141414" stroke="#555" />
            <path d="M15 40 H23 V44 H29 V47 H9 V44 H15 Z M38 27 H42 V31 H46 V33 H36 Z" fill="#e4e8ec" />
          </svg>
        </TaskButton>
      </div>
      <div className="ml-auto flex items-center">
        <span className="font-['Liberation_Mono',monospace] text-[17px]">CH</span>
        <svg viewBox="0 0 24 20" className="ml-[11px] h-[20px] w-[24px]" aria-hidden="true">
          <path d="M1 8 H23 V19 H1 Z" fill="#d8d8d8" stroke="#777" />
          <path d="M4 11 h16 M4 14 h16 M7 17 h10 M6 7 Q8 3 13 5 T20 1" fill="none" stroke="#777" strokeWidth="1" strokeDasharray="2 1" />
        </svg>
        <svg viewBox="0 0 24 24" className="ml-[9px] h-[24px] w-[24px]" aria-hidden="true">
          <circle cx="12" cy="12" r="11" fill="#1424b4" stroke="#9fa9c8" strokeWidth="2" />
          <path d="M8 9 Q8 5 12 5 Q16 5 16 9 Q16 11 12 13 V15 M12 17 V20" fill="none" stroke="#fff" strokeWidth="2.500" />
        </svg>
        <svg viewBox="0 0 14 28" className="ml-[14px] h-[28px] w-[14px]" aria-hidden="true">
          <path d="M5 1 H13 V6 H5 Z M1 4 H9 V9 H1 Z" fill="none" stroke="#fff" strokeWidth="1.500" />
          <path d="M3 21 H11 L7 25 Z" fill="#fff" />
        </svg>
        <svg viewBox="0 0 12 8" className="ml-[14px] h-[8px] w-[12px]" aria-hidden="true">
          <path d="M0 8 L6 0 L12 8 Z" fill="#fff" />
        </svg>
        <svg viewBox="0 0 26 24" className="ml-[18px] h-[24px] w-[26px]" aria-hidden="true">
          <path d="M1 8 H5 L12 1 V22 L5 16 H1 Z" fill="#fff" />
          <ErrorBadge x={17} y={16} />
        </svg>
        <svg viewBox="0 0 26 24" className="ml-[10px] h-[24px] w-[26px]" aria-hidden="true">
          <path d="M8 5 H23 V17 H8 Z" fill="#5b6e88" stroke="#fff" strokeWidth="2" />
          <path d="M10 21 H22 M15 17 V21 M2 3 H8 V9 H2 Z M5 9 V15" fill="none" stroke="#fff" strokeWidth="2" />
        </svg>
        <svg viewBox="0 0 26 24" className="ml-[10px] h-[24px] w-[26px]" aria-hidden="true">
          <path d="M2 1 V23" stroke="#fff" strokeWidth="2" />
          <path d="M4 2 Q9 0 13 3 T22 4 V13 Q17 14 13 12 T4 12 Z" fill="#fff" />
          <ErrorBadge x={17} y={16} />
        </svg>
        <time className="ml-[21px] w-[92px] text-center text-[18px] leading-[27px]">
          20:38
          <br />
          2019/9/20
        </time>
        <button
          type="button"
          aria-label="Show desktop"
          className="ml-[11px] h-full w-[22px] border border-[#2e3b4c] bg-[linear-gradient(to_bottom,#8a99ad,#48566a_50%,#7b8a9e)]"
        />
      </div>
    </footer>
  );
}

export default function App() {
  return (
    <div className="relative flex h-screen flex-col overflow-hidden bg-white font-['Liberation_Sans',sans-serif] text-[22px] leading-[25px] text-[#212121]">
      <BrowserChrome />
      <div className="flex min-h-0 flex-1 bg-[#fefefe]">
        <div className="min-w-0 flex-1 overflow-hidden">
          <div className="flex h-[148px] items-start font-['DejaVu_Sans',sans-serif]">
            <HadoopLogo />
            <h1 className="flex-1 pt-[40px] text-center text-[49px] leading-[60px] font-bold whitespace-nowrap text-[#1a1a1a]">
              NEW,NEW_SAVING,SUBMITTED,ACCEPTED,RUNNING Applications
            </h1>
            <p className="w-[228px] pt-[12px] pr-[6px] text-right text-[19px] whitespace-nowrap">
              Logged in as: dr.who
            </p>
          </div>
          <div className="flex items-start gap-[32px] pr-[6px] pl-[19px]">
            <Sidebar />
            <main className="min-w-0 flex-1">
              <h2 className="mb-[8px] text-[25px] leading-[30px]">Cluster Metrics</h2>
              <MetricsTable columns={clusterMetrics} />
              <h2 className="mb-[8px] text-[25px] leading-[30px]">Cluster Nodes Metrics</h2>
              <MetricsTable columns={nodeMetrics} link />
              <h2 className="mb-[8px] text-[25px] leading-[30px]">Scheduler Metrics</h2>
              <MetricsTable columns={schedulerMetrics} />
              <div className="flex items-start gap-[4px] pt-[8px]">
                <button
                  type="button"
                  className="h-[28px] border-2 border-black bg-[#efefef] px-[11px] text-[20px] leading-[24px] font-bold text-black"
                >
                  Dump scheduler logs
                </button>
                <Dropdown
                  label="Log period"
                  options={["1 min", "5 min", "10 min"]}
                  className="h-[25px] w-[92px] appearance-none bg-transparent text-[20px] leading-[25px] text-black"
                />
              </div>
              <ApplicationQueues />
              <AppsTable />
              <h4 className="leading-[26px] font-bold">Aggregate scheduler counts</h4>
              <MetricsTable columns={aggregateCounts} />
              <h4 className="leading-[26px] font-bold">Last scheduler run</h4>
              <MetricsTable columns={lastRun} />
            </main>
          </div>
        </div>
        <div className="flex w-[22px] shrink-0 flex-col items-center bg-[#ececec] pt-[22px]">
          <Icon className="mb-[12px] h-[14px] w-[18px] text-[#555]" w={5}>
            <path d="M2 20 L12 6 L22 20" />
          </Icon>
          <div className="h-[932px] w-full bg-[#c0c0c0]" />
        </div>
      </div>
      <div className="flex h-[22px] shrink-0 items-center bg-[#ececec] pr-[46px] pl-[18px] text-[#555]">
        <Icon className="h-[18px] w-[20px]" w={5}><path d="M17 2 L8 12 L17 22" /></Icon>
        <div className="mr-[26px] ml-[10px] h-full flex-1 bg-[#c0c0c0]" />
        <Icon className="h-[18px] w-[20px]" w={5}><path d="M7 2 L16 12 L7 22" /></Icon>
      </div>
      <StatusBar />
      <Taskbar />
      <button type="button" aria-label="Remote session panel" className="absolute right-0 bottom-[133px] h-[80px] w-[38px]">
        <svg viewBox="0 0 38 80" className="h-[80px] w-[38px]" aria-hidden="true">
          <path d="M5 0 H38 V80 L3 58 Q1 56 1 52 V5 Z" fill="#484848" />
          <path d="M6 9 H37 V39 H6 Z" fill="#0d4a86" />
          <circle cx="21.500" cy="24" r="13" fill="#6d6d6d" />
          <path d="M9 24 L16 19 V22 H27 V19 L34 24 L27 29 V26 H16 V29 Z" fill="#0d3f78" />
        </svg>
      </button>
    </div>
  );
}
